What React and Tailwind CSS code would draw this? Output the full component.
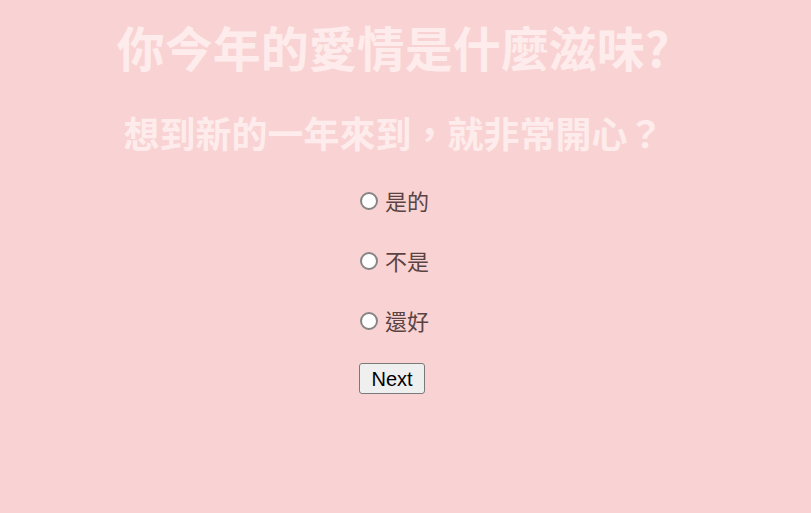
import React from "react";
import { useState } from "react";

const options = ["是的", "不是", "還好"];

function RadioDot({ checked }) {
  return (
    <span className="inline-flex items-center justify-center w-[18px] h-[18px] rounded-full border-2 border-[#858585] bg-white shrink-0">
      {checked && <span className="w-[9px] h-[9px] rounded-full bg-[#0075ff]" />}
    </span>
  );
}

export default function App() {
  const [picked, setPicked] = useState(null);

  return (
    <div
      className="w-full h-[513px] bg-[#f9d3d3] overflow-hidden"
      style={{ fontFamily: '"Noto Sans CJK TC", "Noto Sans", sans-serif' }}
    >
      {/* question headings */}
      <h1 className="pt-[14px] pr-[25px] text-center text-[48px] leading-[64px] font-bold text-[#fdeceb]">
        你今年的愛情是什麼滋味?
      </h1>
      <h2 className="mt-[29px] pr-[24px] text-center text-[36px] leading-[50px] font-bold text-[#fdeceb]">
        想到新的一年來到，就非常開心？
      </h2>

      {/* answers */}
      <div className="mt-[28px] pl-[360px] flex flex-col gap-[29px]">
        {options.map((opt) => (
          <label
            key={opt}
            className="flex items-center gap-[7px] h-[31px] cursor-pointer"
            onClick={() => setPicked(opt)}
          >
            <RadioDot checked={picked === opt} />
            <span className="text-[22px] leading-[31px] text-[#5a4343]">{opt}</span>
          </label>
        ))}
        <div className="-mt-[2px] -ml-[1px]">
          <button
            className="w-[66px] h-[31px] bg-[#efefef] border border-[#7a7a7a] rounded-[3px] text-[20px] leading-none text-black"
            style={{ fontFamily: '"Liberation Sans", Arial, sans-serif' }}
          >
            Next
          </button>
        </div>
      </div>
    </div>
  );
}
